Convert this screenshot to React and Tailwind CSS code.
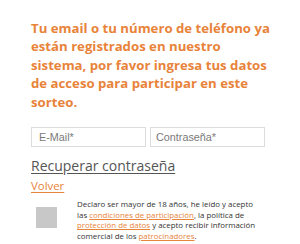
export default function App() {
  return (
    <div className="w-[300px] h-[244px] bg-white overflow-hidden" style={{ fontFamily: '"Open Sans", sans-serif' }}>
      <div className="pl-[31px] pt-[19px]">
        <p className="w-[245px] text-[13.2px] leading-[18.4px] font-bold text-[#e8833a]">
          Tu email o tu número de teléfono ya están registrados en nuestro sistema, por favor ingresa tus datos de acceso para participar en este sorteo.
        </p>
        <div className="flex gap-[4px] mt-[16px]">
          <div className="w-[115px] h-[20px] border border-[#dcdcdc] flex items-center pl-[7px] text-[10.8px] text-[#7a7a7a]" style={{ fontFamily: '"Liberation Sans", Arial, sans-serif' }}>E-Mail*</div>
          <div className="w-[115px] h-[20px] border border-[#dcdcdc] flex items-center pl-[5px] text-[10.8px] text-[#7a7a7a]" style={{ fontFamily: '"Liberation Sans", Arial, sans-serif' }}>Contraseña*</div>
        </div>
        <div className="mt-[10px] text-[14px] leading-[18px] text-[#555] underline underline-offset-2">Recuperar contraseña</div>
        <div className="mt-[3px] text-[11.4px] leading-[15px] text-[#e8833a] underline underline-offset-2">Volver</div>
        <div className="flex mt-[6px]">
          <div className="w-[46px] pl-[5px] pt-[8px]">
            <div className="w-[21px] h-[21px] bg-[#c8c8c8]" />
          </div>
          <p className="w-[181px] text-[7.9px] leading-[10.7px] text-[#333]">
            Declaro ser mayor de 18 años, he leído y acepto las <span className="text-[#e8833a] underline">condiciones de participación</span>, la política de <span className="text-[#e8833a] underline">protección de datos</span> y acepto recibir información comercial de los <span className="text-[#e8833a] underline">patrocinadores</span>.
          </p>
        </div>
      </div>
    </div>
  );
}
